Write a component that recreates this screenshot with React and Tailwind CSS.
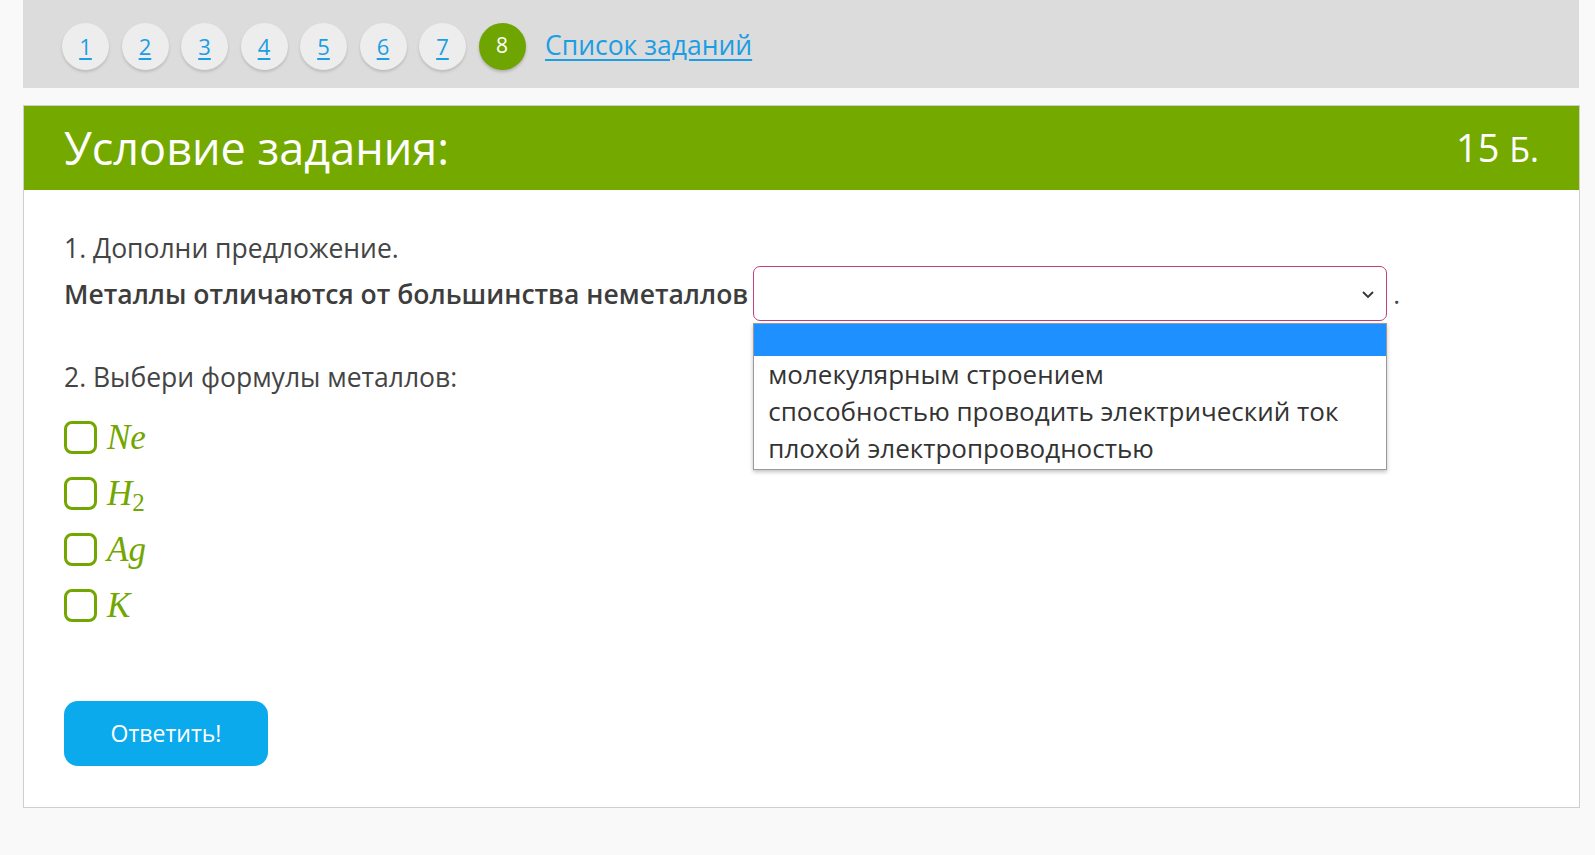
import React from "react";

const nums = ["1", "2", "3", "4", "5", "6", "7"];

function Check({ children }) {
  return (
    <label className="flex items-center h-[56px] gap-[10px]">
      <span className="w-[33px] h-[33px] rounded-[8px] border-[3px] border-[#72a600] bg-white shrink-0" />
      <span
        className="text-[#72a600] text-[35px] italic leading-none"
        style={{ fontFamily: '"Liberation Serif", "DejaVu Serif", serif' }}
      >
        {children}
      </span>
    </label>
  );
}

export default function App() {
  return (
    <div
      className="min-h-[855px] w-full bg-[#f9f9f9] px-[23px] pb-[40px]"
      style={{ fontFamily: '"Open Sans", "Noto Sans", sans-serif' }}
    >
      <div className="h-[88px] w-[1556px] bg-[#dcdcdc] flex items-center pl-[39px] pt-[4px] gap-[12.5px]">
        {nums.map((n) => (
          <a
            key={n}
            href="#"
            className="w-[47px] h-[47px] rounded-full bg-[#ededed] shadow-[0_2px_3px_rgba(0,0,0,0.15)] flex items-center justify-center text-[22px] text-[#1b9ee4] underline underline-offset-[3px]"
          >
            {n}
          </a>
        ))}
        <span className="w-[47px] h-[47px] rounded-full bg-[#6fa500] shadow-[0_2px_3px_rgba(0,0,0,0.2)] flex items-center justify-center text-[21px] text-white">
          8
        </span>
        <a
          href="#"
          className="ml-[7px] text-[26.5px] text-[#1b9ee4] underline underline-offset-[4px]"
        >
          Список заданий
        </a>
      </div>

      <div className="mt-[17px] w-[1557px] bg-white border border-[#cfcfcf] pb-[41px]">
        <div className="h-[84px] bg-[#74aa00] flex items-center justify-between pl-[40px] pr-[40px] pb-[2px]">
          <span className="text-white text-[45px] leading-none">Условие задания:</span>
          <span className="text-white text-[38px] leading-none">
            15 <span className="text-[34px]">Б.</span>
          </span>
        </div>

        <div className="pl-[40px] pt-[39px] text-[#444]">
          <div className="text-[26.5px] leading-[38px]">1. Дополни предложение.</div>
          <div className="flex items-center -mt-[1px]">
            <span className="text-[26.5px] font-semibold leading-[38px] text-[#3d3d3d]">
              Металлы отличаются от большинства неметаллов
            </span>
            <div className="relative ml-[5px]">
              <div className="w-[634px] h-[55px] rounded-[7px] border border-[#c2407a] bg-white flex items-center justify-end pr-[11px]">
                <svg width="14" height="10" viewBox="0 0 14 10">
                  <path d="M2 3 L7 8 L12 3" fill="none" stroke="#333" strokeWidth="1.8" />
                </svg>
              </div>
              <div className="absolute left-0 top-[57px] w-[634px] bg-white border border-[#9a9a9a] shadow-[0_2px_4px_rgba(0,0,0,0.25)] z-10">
                <div className="h-[32px] bg-[#1e90ff]" />
                <div className="px-[14px] pb-[2px] text-[26px] leading-[37px] text-[#333]">
                  <div>молекулярным строением</div>
                  <div>способностью проводить электрический ток</div>
                  <div>плохой электропроводностью</div>
                </div>
              </div>
            </div>
            <span className="text-[26px] leading-[38px] ml-[6px]">.</span>
          </div>

          <div className="text-[26.5px] leading-[38px] mt-[37px]">2. Выбери формулы металлов:</div>
          <div className="mt-[13px] flex flex-col">
            <Check>Ne</Check>
            <Check>
              H<sub className="not-italic text-[25px] relative top-[6px]">2</sub>
            </Check>
            <Check>Ag</Check>
            <Check>K</Check>
          </div>

          <button className="mt-[68px] w-[204px] h-[65px] rounded-[14px] bg-[#0aaaec] text-white text-[23px]">
            Ответить!
          </button>
        </div>
      </div>
    </div>
  );
}
